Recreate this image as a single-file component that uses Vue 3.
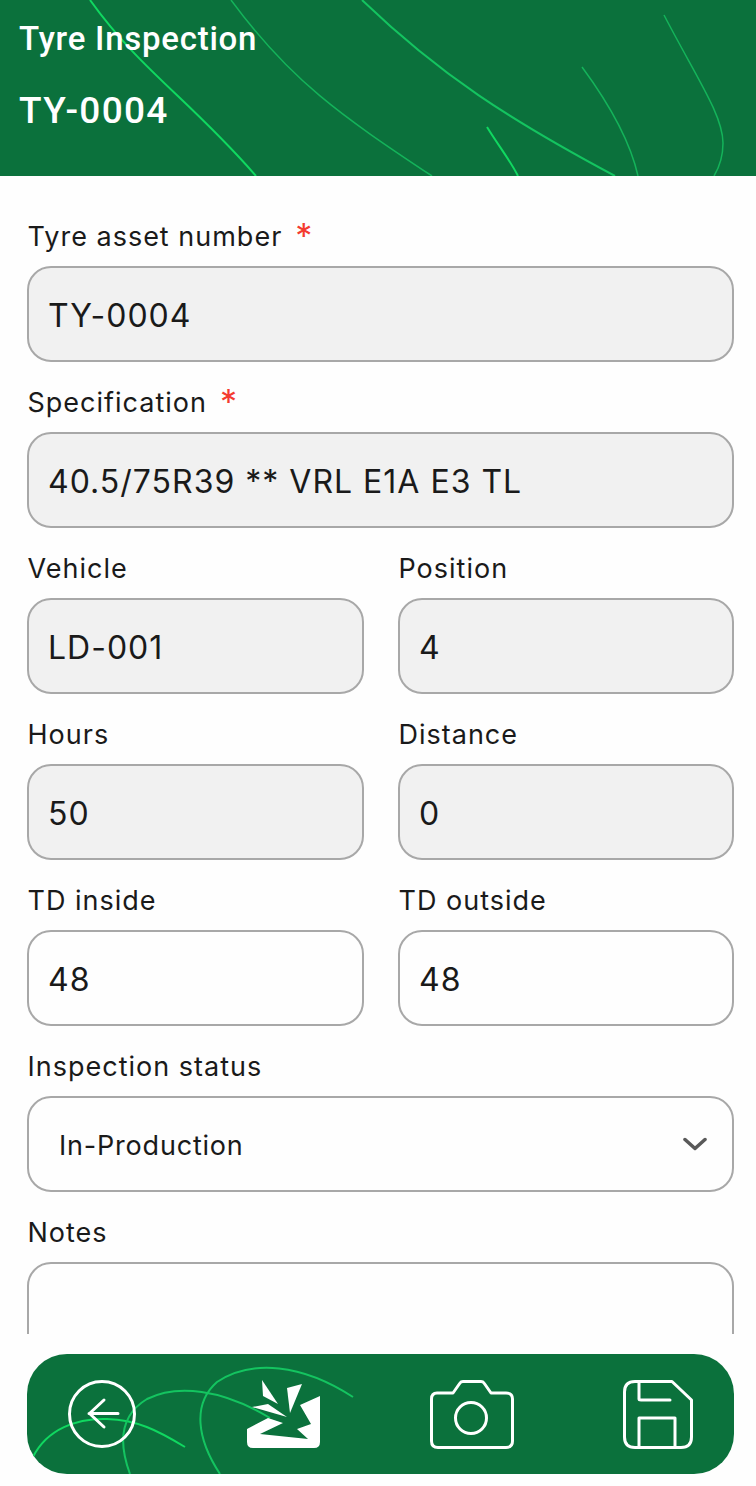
<template>
  <div class="app">
    <header class="header">
      <svg class="swirls" viewBox="0 0 756 176" fill="none">
        <path d="M90 0C140 70 190 100 256 176" stroke="#10d860" stroke-width="2" />
        <path d="M231 0C290 80 340 115 432 176" stroke="#14b35a" stroke-width="1.5" />
        <path d="M362 0C440 75 510 120 615 176" stroke="#14c460" stroke-width="2" />
        <path d="M487 127C498 145 510 160 518 176" stroke="#10d860" stroke-width="2" />
        <path d="M582 67C610 105 630 140 638 176" stroke="#14b35a" stroke-width="1.5" />
        <path d="M664 15C695 75 723 115 723 143C723 155 720 166 714 176" stroke="#14b35a" stroke-width="1.5" />
      </svg>
      <h1>Tyre Inspection</h1>
      <h2>TY-0004</h2>
    </header>

    <main class="main">
      <div class="form">
        <div v-for="f in fields" :key="f.label" class="field" :class="{ full: f.full }">
          <label>{{ f.label }}<span v-if="f.required" class="req">*</span></label>
          <input :value="f.value" :class="{ locked: f.locked }" :readonly="f.locked" />
        </div>
        <div class="field full">
          <label>Inspection status</label>
          <div class="select-wrap">
            <select v-model="status">
              <option>In-Production</option>
              <option>Scrapped</option>
            </select>
            <svg class="chevron" viewBox="0 0 24 14" fill="none">
              <path d="M2 2.5L12 11.5L22 2.5" stroke="#595959" stroke-width="3.5" stroke-linecap="round" stroke-linejoin="round" />
            </svg>
          </div>
        </div>
        <div class="field full">
          <label>Notes</label>
          <textarea class="notes"></textarea>
        </div>
      </div>
    </main>

    <footer class="footer">
      <div class="bar">
        <svg class="swirls" viewBox="0 0 707 120" fill="none">
          <path d="M6 103C20 75 50 64 80 65C110 66 130 76 158 93" stroke="#10d860" stroke-width="2" />
          <path d="M103 120C90 85 95 60 120 45C150 30 195 35 243 64" stroke="#14c460" stroke-width="2" />
          <path d="M193 120C170 85 165 50 190 28C225 5 275 10 326 43" stroke="#14c460" stroke-width="2" />
        </svg>
        <button type="button" class="icon-btn">
          <svg width="68" height="68" viewBox="0 0 68 68" fill="none" stroke="#fff" stroke-width="3" stroke-linecap="round" stroke-linejoin="round">
            <circle cx="34" cy="34" r="32.5" />
            <path d="M50 33.5H21M36 20L21.5 33.5L36 47" />
          </svg>
        </button>
        <div class="logo">
          <svg width="74" height="68" viewBox="247 1379 74 68" fill="#fff">
            <path d="M262 1379L278 1403L263 1395Z" />
            <path d="M287 1387L302 1383L290 1412Z" />
            <path d="M252 1406L268 1403L287 1416Z" />
            <path d="M320 1395L300 1404L311 1423L297 1428L308 1438L260 1433L283 1422L268 1417L247 1428V1441Q247 1447 253 1447H314Q320 1447 320 1441Z" />
          </svg>
        </div>
        <button type="button" class="icon-btn">
          <svg width="84" height="69" viewBox="0 0 84 69" fill="none" stroke="#fff" stroke-width="3" stroke-linejoin="round">
            <path d="M7 13H23L30 3Q31 1.500 33 1.500H51Q53 1.500 54 3L61 13H76Q82.500 13 82.500 19V61Q82.500 67.500 76 67.500H8Q1.500 67.500 1.500 61V19Q1.500 13 7 13Z" />
            <circle cx="41" cy="38" r="15.500" />
          </svg>
        </button>
        <button type="button" class="icon-btn">
          <svg width="70" height="69" viewBox="0 0 70 69" fill="none" stroke="#fff" stroke-width="3" stroke-linecap="round" stroke-linejoin="round">
            <path d="M12 1.500H49L68.500 20V57Q68.500 67.500 58 67.500H12Q1.500 67.500 1.500 57V12Q1.500 1.500 12 1.500Z" />
            <path d="M16 1.500V19Q16 20 18 20H47" />
            <path d="M16 67.500V38H52V67.500" />
          </svg>
        </button>
      </div>
    </footer>
  </div>
</template>

<script setup>
import { ref } from 'vue'

const status = ref('In-Production')

const fields = [
  { label: 'Tyre asset number', value: 'TY-0004', locked: true, required: true, full: true },
  { label: 'Specification', value: '40.5/75R39 ** VRL E1A E3 TL', locked: true, required: true, full: true },
  { label: 'Vehicle', value: 'LD-001', locked: true },
  { label: 'Position', value: '4', locked: true },
  { label: 'Hours', value: '50', locked: true },
  { label: 'Distance', value: '0', locked: true },
  { label: 'TD inside', value: '48' },
  { label: 'TD outside', value: '48' },
]
</script>

<style>
* {
  box-sizing: border-box;
}
body {
  margin: 0;
  background: #fefefe;
}
</style>

<style scoped>
.app {
  height: 1486px;
  display: flex;
  flex-direction: column;
  overflow: hidden;
  font-family: Inter, "Liberation Sans", sans-serif;
  color: #1a1a1a;
  background: #fefefe;
}
.header {
  position: relative;
  height: 176px;
  flex: none;
  padding: 17px 19px 0;
  background: #0b713c;
  color: #fff;
  overflow: hidden;
}
.swirls {
  position: absolute;
  left: 0;
  top: 0;
  width: 100%;
  height: 100%;
}
.header h1,
.header h2 {
  position: relative;
  margin: 0;
  font-family: Roboto, sans-serif;
  font-weight: 500;
}
.header h1 {
  font-size: 33px;
  line-height: 44px;
  letter-spacing: 0.75px;
}
.header h2 {
  margin-top: 28px;
  font-size: 37px;
  line-height: 44px;
  letter-spacing: 1.3px;
}
.main {
  flex: 1;
  min-height: 0;
  overflow: hidden;
  padding: 44px 22px 0 27px;
}
.form {
  display: grid;
  grid-template-columns: 337px 336px;
  column-gap: 34px;
  row-gap: 24px;
}
.field.full {
  grid-column: 1 / -1;
}
.field label {
  display: block;
  height: 34px;
  margin-bottom: 12px;
  padding-left: 0.5px;
  font-size: 27px;
  line-height: 34px;
  letter-spacing: 1px;
}
.req {
  margin-left: 13px;
  color: #f43b30;
  font-size: 34px;
  line-height: 20px;
  letter-spacing: 0;
  vertical-align: -2px;
}
.field input,
.field select,
.notes {
  display: block;
  width: 100%;
  height: 96px;
  padding: 2px 19px 0;
  border: 2px solid #a8a8a8;
  border-radius: 24px;
  background: #fefefe;
  color: #1a1a1a;
  font-family: inherit;
  font-size: 32px;
  letter-spacing: 1px;
  outline: none;
}
.field input.locked {
  background: #f1f1f1;
}
.select-wrap {
  position: relative;
}
.field select {
  padding-left: 30px;
  font-size: 27px;
  letter-spacing: 0.8px;
  appearance: none;
}
.chevron {
  position: absolute;
  right: 27px;
  top: 41px;
  width: 24px;
  height: 14px;
}
.notes {
  resize: none;
}
.footer {
  flex: none;
  padding: 20px 22px 12px 27px;
}
.bar {
  position: relative;
  height: 120px;
  display: flex;
  align-items: center;
  justify-content: space-between;
  padding: 0 41px;
  border-radius: 40px;
  background: #0b713c;
  overflow: hidden;
}
.icon-btn {
  position: relative;
  display: flex;
  padding: 0;
  border: none;
  background: none;
  cursor: pointer;
}
.logo {
  position: relative;
  display: flex;
  margin-left: 2px;
}
</style>
